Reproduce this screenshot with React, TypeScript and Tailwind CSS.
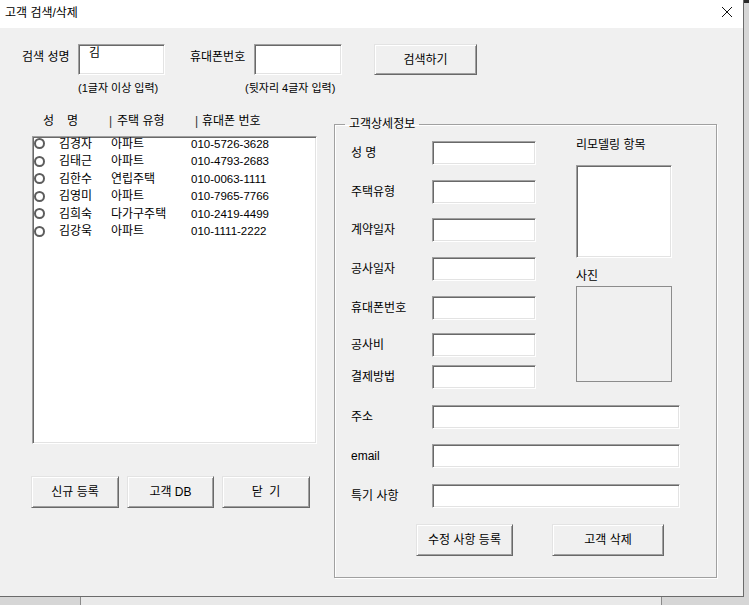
const font = "font-['Liberation_Sans','Noto_Sans_CJK_KR',sans-serif]";

const sunken =
  "bg-white border border-t-[#a0a0a0] border-l-[#a0a0a0] border-r-white border-b-white shadow-[inset_1px_1px_0_#696969,inset_-1px_-1px_0_#e3e3e3]";
const raised =
  "bg-[#f0f0f0] border border-t-[#e3e3e3] border-l-[#e3e3e3] border-r-[#696969] border-b-[#696969] shadow-[inset_1px_1px_0_#ffffff,inset_-1px_-1px_0_#a0a0a0] flex items-center justify-center shrink-0";

const customers = [
  ["김경자", "아파트", "010-5726-3628"],
  ["김태근", "아파트", "010-4793-2683"],
  ["김한수", "연립주택", "010-0063-1111"],
  ["김영미", "아파트", "010-7965-7766"],
  ["김희숙", "다가구주택", "010-2419-4499"],
  ["김강욱", "아파트", "010-1111-2222"],
];

const fields = [
  { label: "성 명", mt: "mt-[9px]" },
  { label: "주택유형", mt: "mt-[15px]" },
  { label: "계약일자", mt: "mt-[14px]" },
  { label: "공사일자", mt: "mt-[15px]" },
  { label: "휴대폰번호", mt: "mt-[15px]" },
  { label: "공사비", mt: "mt-[13px]" },
  { label: "결제방법", mt: "mt-[8px]" },
];

const wideFields = [
  { label: "주소", mt: "mt-[16px]" },
  { label: "email", mt: "mt-[15px]" },
  { label: "특기 사항", mt: "mt-[16px]" },
];

function Radio() {
  return (
    <span className="ml-[1px] w-[11px] h-[11px] rounded-full border-2 border-[#5c5c5c] bg-white shrink-0" />
  );
}

export default function App() {
  return (
    <div className={`relative w-[749px] h-[605px] overflow-hidden bg-[#d6d6d6] text-[12px] leading-[16px] text-black ${font}`}>
      {/* window behind */}
      <div className="absolute left-[80px] top-[596px] w-[582px] h-[9px] border-x border-[#8a8a8a] bg-[#e9e9e9]" />
      <div className="absolute right-0 top-0 w-[5px] h-[3px] bg-[#2b2b2b]" />

      <div className="relative w-[744px] h-[597px] flex flex-col border-r border-b border-[#6b6b6b] bg-[#f0f0f0]">
        {/* title bar */}
        <div className="h-[28px] bg-white flex items-center justify-between shrink-0">
          <span className="pl-[5px] pb-[2px]">고객 검색/삭제</span>
          <svg width="12" height="12" viewBox="0 0 12 12" className="mr-[10px] mb-[4px]">
            <path d="M1 1 L11 11 M11 1 L1 11" stroke="#111" strokeWidth="1" />
          </svg>
        </div>

        {/* body */}
        <div className="flex-1 pt-[16px]">
          {/* search row */}
          <div className="flex items-start h-[31px]">
            <span className="ml-[22px] w-[56px] mt-[5px] shrink-0">검색 성명</span>
            <div className={`${sunken} w-[87px] h-[31px] pl-[10px] shrink-0`}>김</div>
            <span className="ml-[25px] w-[64px] mt-[5px] shrink-0">휴대폰번호</span>
            <div className={`${sunken} w-[88px] h-[31px] shrink-0`} />
            <button className={`${raised} ml-[32px] w-[103px] h-[31px]`}>검색하기</button>
          </div>
          <div className="flex mt-[5px] text-[11px]">
            <span className="ml-[78px] w-[167px]">(1글자 이상 입력)</span>
            <span>(뒷자리 4글자 입력)</span>
          </div>

          {/* main */}
          <div className="flex items-start mt-[17px]">
            {/* left column */}
            <div className="ml-[31px] w-[286px] flex flex-col shrink-0">
              <div className="flex h-[16px] whitespace-pre">
                <span className="ml-[12px] w-[24px]">성</span>
                <span className="w-[42px]">명</span>
                <span className="w-[8px] text-[#333]">|</span>
                <span className="w-[78px]">주택 유형</span>
                <span className="w-[7px] text-[#333]">|</span>
                <span>휴대폰 번호</span>
              </div>
              <div className={`${sunken} ml-[1px] mt-[7px] w-[285px] h-[308px] overflow-hidden`}>
                <div className="-mt-[2px]">
                  {customers.map(([name, type, phone]) => (
                    <div key={phone} className="flex items-center h-[17.5px]">
                      <Radio />
                      <span className="ml-[14px] w-[52px]">{name}</span>
                      <span className="w-[80px]">{type}</span>
                      <span className="text-[11.5px]">{phone}</span>
                    </div>
                  ))}
                </div>
              </div>
              <div className="flex mt-[32px]">
                <button className={`${raised} w-[88px] h-[32px]`}>신규 등록</button>
                <button className={`${raised} ml-[8px] w-[87px] h-[32px]`}>고객 DB</button>
                <button className={`${raised} ml-[8px] w-[88px] h-[32px] whitespace-pre`}>닫  기</button>
              </div>
            </div>

            {/* detail group */}
            <fieldset className="ml-[17px] mt-[3px] w-[383px] border border-[#a0a0a0] shadow-[1px_1px_0_#ffffff,inset_1px_1px_0_#ffffff] pb-[21px]">
              <legend className="ml-[10px] px-[4px]">고객상세정보</legend>
              <div className="flex items-start pl-[16px]">
                <div className="flex flex-col">
                  {fields.map((f) => (
                    <div key={f.label} className={`flex items-center h-[24px] ${f.mt}`}>
                      <span className="w-[81px]">{f.label}</span>
                      <div className={`${sunken} w-[104px] h-[24px]`} />
                    </div>
                  ))}
                </div>
                <div className="ml-[40px] flex flex-col">
                  <span className="mt-[5px]">리모델링 항목</span>
                  <div className={`${sunken} mt-[12px] w-[96px] h-[93px]`} />
                  <span className="mt-[10px]">사진</span>
                  <div className="mt-[2px] w-[96px] h-[96px] border border-[#8c8c8c]" />
                </div>
              </div>
              {wideFields.map((f) => (
                <div key={f.label} className={`flex items-center h-[24px] pl-[16px] ${f.mt}`}>
                  <span className="w-[81px]">{f.label}</span>
                  <div className={`${sunken} w-[248px] h-[24px]`} />
                </div>
              ))}
              <div className="flex mt-[16px]">
                <button className={`${raised} ml-[81px] w-[97px] h-[32px]`}>수정 사항 등록</button>
                <button className={`${raised} ml-[39px] w-[112px] h-[32px]`}>고객 삭제</button>
              </div>
            </fieldset>
          </div>
        </div>
      </div>
    </div>
  );
}
